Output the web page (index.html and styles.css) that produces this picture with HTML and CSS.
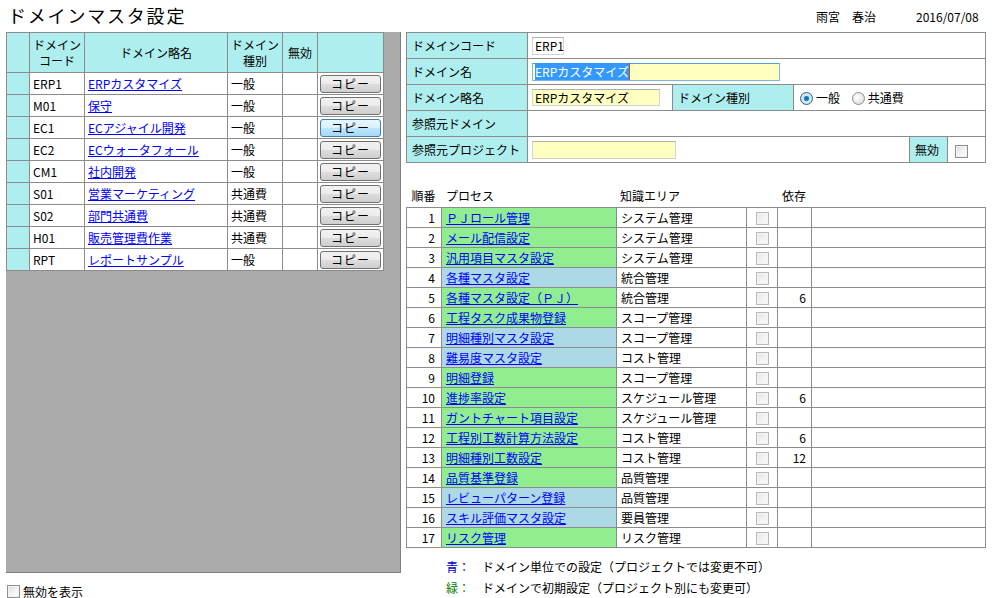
FILE: index.html
```html
<!DOCTYPE html>
<html lang="ja">
<head>
<meta charset="utf-8">
<title>ドメインマスタ設定</title>
<link rel="stylesheet" href="styles.css">
</head>
<body>
<header class="top">
  <h1 class="title">ドメインマスタ設定</h1>
  <div class="user">雨宮　春治</div>
  <div class="date">2016/07/08</div>
</header>
<main class="main">
  <section class="left">
    <div class="panel">
      <table class="dlist">
        <colgroup>
          <col class="c-mark"><col class="c-code"><col class="c-name"><col class="c-type"><col class="c-inv"><col class="c-btn">
        </colgroup>
        <thead>
          <tr class="hrow">
            <th></th><th>ドメイン<br>コード</th><th>ドメイン略名</th><th>ドメイン<br>種別</th><th>無効</th><th></th>
          </tr>
        </thead>
        <tbody>
          <tr><td class="mark"></td><td>ERP1</td><td><a href="#">ERPカスタマイズ</a></td><td>一般</td><td></td><td class="bc"><span class="btn">コピー</span></td></tr>
          <tr><td class="mark"></td><td>M01</td><td><a href="#">保守</a></td><td>一般</td><td></td><td class="bc"><span class="btn">コピー</span></td></tr>
          <tr><td class="mark"></td><td>EC1</td><td><a href="#">ECアジャイル開発</a></td><td>一般</td><td></td><td class="bc"><span class="btn hot">コピー</span></td></tr>
          <tr><td class="mark"></td><td>EC2</td><td><a href="#">ECウォータフォール</a></td><td>一般</td><td></td><td class="bc"><span class="btn">コピー</span></td></tr>
          <tr><td class="mark"></td><td>CM1</td><td><a href="#">社内開発</a></td><td>一般</td><td></td><td class="bc"><span class="btn">コピー</span></td></tr>
          <tr><td class="mark"></td><td>S01</td><td><a href="#">営業マーケティング</a></td><td>共通費</td><td></td><td class="bc"><span class="btn">コピー</span></td></tr>
          <tr><td class="mark"></td><td>S02</td><td><a href="#">部門共通費</a></td><td>共通費</td><td></td><td class="bc"><span class="btn">コピー</span></td></tr>
          <tr><td class="mark"></td><td>H01</td><td><a href="#">販売管理費作業</a></td><td>共通費</td><td></td><td class="bc"><span class="btn">コピー</span></td></tr>
          <tr><td class="mark"></td><td>RPT</td><td><a href="#">レポートサンプル</a></td><td>一般</td><td></td><td class="bc"><span class="btn">コピー</span></td></tr>
        </tbody>
      </table>
    </div>
    <label class="showinv"><span class="cb"></span>無効を表示</label>
  </section>

  <section class="right">
    <table class="form">
      <colgroup>
        <col class="f1"><col class="f2"><col class="f3"><col class="f4"><col class="f5"><col class="f6">
      </colgroup>
      <tr>
        <th>ドメインコード</th>
        <td colspan="5"><span class="inp code">ERP1</span></td>
      </tr>
      <tr>
        <th>ドメイン名</th>
        <td colspan="5"><span class="inp yel name"><span class="sel">ERPカスタマイズ</span></span></td>
      </tr>
      <tr>
        <th>ドメイン略名</th>
        <td><span class="inp yel short">ERPカスタマイズ</span></td>
        <th>ドメイン種別</th>
        <td colspan="3" class="radios">
          <span class="radio on"></span><span class="rl">一般</span>
          <span class="radio"></span><span class="rl">共通費</span>
        </td>
      </tr>
      <tr>
        <th>参照元ドメイン</th>
        <td colspan="5"></td>
      </tr>
      <tr>
        <th>参照元プロジェクト</th>
        <td colspan="3"><span class="inp yel proj"></span></td>
        <th>無効</th>
        <td><span class="cb"></span></td>
      </tr>
    </table>

    <div class="phead">
      <span class="ph-seq">順番</span>
      <span class="ph-proc">プロセス</span>
      <span class="ph-area">知識エリア</span>
      <span class="ph-cb"></span>
      <span class="ph-dep">依存</span>
      <span></span>
    </div>
    <table class="proc">
      <colgroup>
        <col class="p1"><col class="p2"><col class="p3"><col class="p4"><col class="p5"><col class="p6">
      </colgroup>
      <tbody>
        <tr><td class="seq">1</td><td class="g"><a href="#">ＰＪロール管理</a></td><td class="area">システム管理</td><td class="cbc"><span class="cb dis"></span></td><td class="dep"></td><td></td></tr>
        <tr><td class="seq">2</td><td class="g"><a href="#">メール配信設定</a></td><td class="area">システム管理</td><td class="cbc"><span class="cb dis"></span></td><td class="dep"></td><td></td></tr>
        <tr><td class="seq">3</td><td class="g"><a href="#">汎用項目マスタ設定</a></td><td class="area">システム管理</td><td class="cbc"><span class="cb dis"></span></td><td class="dep"></td><td></td></tr>
        <tr><td class="seq">4</td><td class="b"><a href="#">各種マスタ設定</a></td><td class="area">統合管理</td><td class="cbc"><span class="cb dis"></span></td><td class="dep"></td><td></td></tr>
        <tr><td class="seq">5</td><td class="g"><a href="#">各種マスタ設定（ＰＪ）</a></td><td class="area">統合管理</td><td class="cbc"><span class="cb dis"></span></td><td class="dep">6</td><td></td></tr>
        <tr><td class="seq">6</td><td class="g"><a href="#">工程タスク成果物登録</a></td><td class="area">スコープ管理</td><td class="cbc"><span class="cb dis"></span></td><td class="dep"></td><td></td></tr>
        <tr><td class="seq">7</td><td class="b"><a href="#">明細種別マスタ設定</a></td><td class="area">スコープ管理</td><td class="cbc"><span class="cb dis"></span></td><td class="dep"></td><td></td></tr>
        <tr><td class="seq">8</td><td class="b"><a href="#">難易度マスタ設定</a></td><td class="area">コスト管理</td><td class="cbc"><span class="cb dis"></span></td><td class="dep"></td><td></td></tr>
        <tr><td class="seq">9</td><td class="g"><a href="#">明細登録</a></td><td class="area">スコープ管理</td><td class="cbc"><span class="cb dis"></span></td><td class="dep"></td><td></td></tr>
        <tr><td class="seq">10</td><td class="g"><a href="#">進捗率設定</a></td><td class="area">スケジュール管理</td><td class="cbc"><span class="cb dis"></span></td><td class="dep">6</td><td></td></tr>
        <tr><td class="seq">11</td><td class="g"><a href="#">ガントチャート項目設定</a></td><td class="area">スケジュール管理</td><td class="cbc"><span class="cb dis"></span></td><td class="dep"></td><td></td></tr>
        <tr><td class="seq">12</td><td class="g"><a href="#">工程別工数計算方法設定</a></td><td class="area">コスト管理</td><td class="cbc"><span class="cb dis"></span></td><td class="dep">6</td><td></td></tr>
        <tr><td class="seq">13</td><td class="g"><a href="#">明細種別工数設定</a></td><td class="area">コスト管理</td><td class="cbc"><span class="cb dis"></span></td><td class="dep">12</td><td></td></tr>
        <tr><td class="seq">14</td><td class="g"><a href="#">品質基準登録</a></td><td class="area">品質管理</td><td class="cbc"><span class="cb dis"></span></td><td class="dep"></td><td></td></tr>
        <tr><td class="seq">15</td><td class="b"><a href="#">レビューパターン登録</a></td><td class="area">品質管理</td><td class="cbc"><span class="cb dis"></span></td><td class="dep"></td><td></td></tr>
        <tr><td class="seq">16</td><td class="b"><a href="#">スキル評価マスタ設定</a></td><td class="area">要員管理</td><td class="cbc"><span class="cb dis"></span></td><td class="dep"></td><td></td></tr>
        <tr><td class="seq">17</td><td class="g"><a href="#">リスク管理</a></td><td class="area">リスク管理</td><td class="cbc"><span class="cb dis"></span></td><td class="dep"></td><td></td></tr>
      </tbody>
    </table>
    <div class="legend">
      <div class="lg"><span class="lk blue">青：</span><span>ドメイン単位での設定（プロジェクトでは変更不可）</span></div>
      <div class="lg"><span class="lk green">緑：</span><span>ドメインで初期設定（プロジェクト別にも変更可）</span></div>
    </div>
  </section>
</main>
</body>
</html>
```
FILE: styles.css
```css
* { box-sizing: border-box; }
html, body { margin: 0; padding: 0; background: #fff; }
body {
  font-family: "Noto Sans CJK JP", "Noto Sans", sans-serif;
  font-size: 12px;
  color: #000;
  width: 995px;
  height: 598px;
  overflow: hidden;
}
a { color: #0000ff; text-decoration: underline; }

.top {
  height: 32px;
  display: flex;
  align-items: center;
}
.title {
  margin: 0 0 0 8px;
  font-size: 18px;
  font-weight: normal;
  letter-spacing: 1.8px;
  line-height: 24px;
  padding-bottom: 2px;
}
.user { margin-left: auto; width: 100px; }
.date { width: 79px; }

.main {
  display: flex;
  align-items: flex-start;
  padding-left: 6px;
}
.left { width: 395px; }
.panel {
  height: 541px;
  background: #aaaaaa;
  border: 1px solid #808080;
  border-top: none;
  border-left: none;
}
.dlist {
  border-collapse: collapse;
  table-layout: fixed;
  width: 377px;
  background: #fff;
}
.dlist td, .dlist th {
  border: 1px solid #8c8c8c;
  padding: 0 0 0 3px;
  white-space: nowrap;
  overflow: hidden;
}
.c-mark { width: 23px; }
.c-code { width: 55px; }
.c-name { width: 143px; }
.c-type { width: 55px; }
.c-inv { width: 35px; }
.c-btn { width: 66px; }
.dlist .hrow { height: 40px; }
.dlist th {
  background: #afeeee;
  font-weight: normal;
  text-align: center;
  line-height: 16px;
  padding: 0;
}
.dlist tbody tr { height: 22px; }
.dlist td { line-height: 14px; }
.dlist td.mark { background: #afeeee; }
.dlist td.bc { padding: 0 0 0 2px; }
.btn {
  display: block;
  width: 61px;
  height: 18px;
  border: 1px solid #707070;
  border-radius: 3px;
  background: linear-gradient(#f2f2f2 0%, #ebebeb 50%, #dddddd 51%, #cfcfcf 100%);
  text-align: center;
  line-height: 16px;
  letter-spacing: 1px;
}
.btn.hot {
  border-color: #3c7fb1;
  background: linear-gradient(#eaf6fd 0%, #d9f0fc 50%, #bee6fd 51%, #a7d9f5 100%);
}

.showinv {
  display: flex;
  align-items: center;
  height: 25px;
  padding-left: 1px;
  padding-top: 11px;
}
.cb {
  display: inline-block;
  width: 13px;
  height: 13px;
  border: 1px solid #8e8f8f;
  background: linear-gradient(135deg, #dcdcdc 0%, #f6f6f6 60%, #ffffff 100%);
  box-shadow: inset 0 0 0 1px #f4f4f4;
  vertical-align: middle;
}
.showinv .cb { margin-right: 3px; }
.cb.dis {
  border-color: #b8b8b8;
  background: linear-gradient(135deg, #e6e6e6 0%, #f4f4f4 60%, #fafafa 100%);
}

.right {
  width: 579px;
  margin-left: 5px;
}
.form {
  border-collapse: collapse;
  table-layout: fixed;
  width: 579px;
}
.f1 { width: 121px; }
.f2 { width: 145px; }
.f3 { width: 121px; }
.f4 { width: 116px; }
.f5 { width: 38px; }
.f6 { width: 38px; }
.form tr { height: 26px; }
.form th, .form td {
  border: 1px solid #8c8c8c;
  padding: 0 0 0 4px;
  white-space: nowrap;
  overflow: hidden;
}
.form th {
  background: #afeeee;
  font-weight: normal;
  text-align: left;
  padding-left: 5px;
}
.inp {
  display: block;
  height: 18px;
  border: 1px solid #d0d4da;
  border-top-color: #abadb3;
  background: #fff;
  line-height: 16px;
  padding-left: 2px;
}
.inp.yel { background: #ffffc0; }
.inp.code { width: 32px; }
.inp.name { width: 248px; border-color: #7eb4ea; border-top-color: #569de5; }
.inp.short { width: 128px; height: 17px; }
.inp.proj { width: 144px; }
.sel { background: #3399ff; color: #fff; border-right: 1px solid #c05000; }
.form td.radios { padding-left: 6px; }
.radio {
  display: inline-block;
  width: 13px;
  height: 13px;
  border-radius: 50%;
  border: 1px solid #8e8f8f;
  background: radial-gradient(circle at 40% 40%, #ffffff 0%, #e6e6e6 60%, #cfcfcf 100%);
  vertical-align: middle;
  position: relative;
  top: -1px;
}
.radio.on {
  border-color: #2c628b;
  background: radial-gradient(circle, #0a5f9e 0%, #2a8ad4 30%, #d8ecf7 40%, #c4d9e8 100%);
}
.rl { margin: 0 9px 0 3px; }
.form td .cb { margin-left: 3px; }

.phead {
  display: grid;
  grid-template-columns: 35px 175px 130px 31px 34px 174px;
  height: 22px;
  line-height: 22px;
  margin-top: 22px;
}
.ph-seq { text-align: center; }
.ph-proc { padding-left: 5px; }
.ph-area { padding-left: 4px; }
.ph-dep { text-align: center; }

.proc {
  border-collapse: collapse;
  table-layout: fixed;
  width: 579px;
}
.p1 { width: 35px; }
.p2 { width: 175px; }
.p3 { width: 130px; }
.p4 { width: 31px; }
.p5 { width: 34px; }
.p6 { width: 174px; }
.proc tr { height: 20px; }
.proc td {
  border: 1px solid #8c8c8c;
  padding: 0;
  white-space: nowrap;
  overflow: hidden;
  line-height: 14px;
}
.proc td.seq { text-align: right; padding-right: 6px; }
.proc td.g { background: #90ee90; padding-left: 4px; }
.proc td.b { background: #add8e6; padding-left: 4px; }
.proc td.area { padding-left: 4px; }
.proc td.cbc { text-align: center; }
.proc td.dep { text-align: right; padding-right: 5px; }

.legend { margin-top: 8px; padding-left: 40px; }
.lg { height: 21px; line-height: 21px; display: flex; }
.lk { width: 36px; }
.lk.blue { color: #0000cc; }
.lk.green { color: #008000; }
```
